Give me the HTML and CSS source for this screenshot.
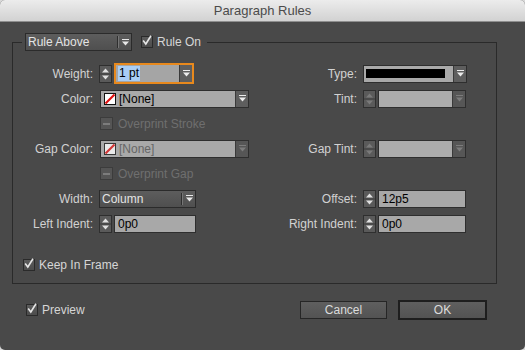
FILE: index.html
```html
<!DOCTYPE html>
<html>
<head>
<meta charset="utf-8">
<link rel="stylesheet" href="styles.css">
</head>
<body>
<div class="window">
  <div class="titlebar">Paragraph Rules</div>
  <div class="content">
    <fieldset class="group">
      <legend class="legend">
        <div class="dd dd-rule">
          <span class="dd-text">Rule Above</span>
          <span class="dd-sep"></span>
          <span class="dd-btn"><svg width="7" height="7" viewBox="0 0 7 7"><rect x="0" y="0" width="7" height="1" fill="#e8e8e8"/><path d="M0 2.5h7L3.5 6.5z" fill="#e8e8e8"/></svg></span>
        </div>
        <label class="check"><span class="box"><svg width="12" height="12" viewBox="0 0 12 12"><path d="M2.2 5.6 L4.8 9 L10 0.8" fill="none" stroke="#e6e6e6" stroke-width="1.6"/></svg></span><span>Rule On</span></label>
      </legend>

      <div class="grid">
        <!-- row 1 -->
        <div class="lbl">Weight:</div>
        <div class="ctrl">
          <span class="spin"><svg width="11" height="16" viewBox="0 0 11 16"><path d="M2 6.5L5.5 2.5L9 6.5z" fill="#e0e0e0"/><rect x="0" y="7.5" width="11" height="1" fill="#3a3a3a"/><path d="M2 9.5h7L5.5 13.5z" fill="#e0e0e0"/></svg></span>
          <span class="combo combo-focus">
            <span class="combo-text"><span class="sel">1 pt</span></span>
            <span class="combo-btn"><svg width="7" height="7" viewBox="0 0 7 7"><rect x="0" y="0" width="7" height="1" fill="#ececec"/><path d="M0 2.5h7L3.5 6.5z" fill="#ececec"/></svg></span>
          </span>
        </div>
        <div class="lbl">Type:</div>
        <div class="ctrl">
          <span class="combo combo-type">
            <span class="combo-text"><span class="line-sample"></span></span>
            <span class="combo-btn"><svg width="7" height="7" viewBox="0 0 7 7"><rect x="0" y="0" width="7" height="1" fill="#ececec"/><path d="M0 2.5h7L3.5 6.5z" fill="#ececec"/></svg></span>
          </span>
        </div>

        <!-- row 2 -->
        <div class="lbl">Color:</div>
        <div class="ctrl">
          <span class="combo combo-color">
            <span class="swatch"><svg width="12" height="12" viewBox="0 0 12 12"><rect x="0.5" y="0.5" width="11" height="11" fill="#fff" stroke="#111"/><path d="M1.5 10.5L10.5 1.5" stroke="#e01010" stroke-width="2.2"/></svg></span>
            <span class="combo-text">[None]</span>
            <span class="combo-btn"><svg width="7" height="7" viewBox="0 0 7 7"><rect x="0" y="0" width="7" height="1" fill="#ececec"/><path d="M0 2.5h7L3.5 6.5z" fill="#ececec"/></svg></span>
          </span>
        </div>
        <div class="lbl">Tint:</div>
        <div class="ctrl">
          <span class="spin spin-off"><svg width="11" height="16" viewBox="0 0 11 16"><path d="M2 6.5L5.5 2.5L9 6.5z" fill="#7a7a7a"/><rect x="0" y="7.5" width="11" height="1" fill="#3a3a3a"/><path d="M2 9.5h7L5.5 13.5z" fill="#7a7a7a"/></svg></span>
          <span class="combo combo-tint combo-off">
            <span class="combo-text"></span>
            <span class="combo-btn"><svg width="7" height="7" viewBox="0 0 7 7"><rect x="0" y="0" width="7" height="1" fill="#7c7c7c"/><path d="M0 2.5h7L3.5 6.5z" fill="#7c7c7c"/></svg></span>
          </span>
        </div>

        <!-- row 3 -->
        <div class="lbl"></div>
        <div class="ctrl opt">
          <label class="check check-off"><span class="box box-mixed"><span class="dash"></span></span><span>Overprint Stroke</span></label>
        </div>

        <!-- row 4 -->
        <div class="lbl">Gap Color:</div>
        <div class="ctrl">
          <span class="combo combo-color combo-off">
            <span class="swatch swatch-off"><svg width="12" height="12" viewBox="0 0 12 12"><rect x="0.5" y="0.5" width="11" height="11" fill="#fff" stroke="#111"/><path d="M1.5 10.5L10.5 1.5" stroke="#e01010" stroke-width="2.2"/></svg></span>
            <span class="combo-text">[None]</span>
            <span class="combo-btn"><svg width="7" height="7" viewBox="0 0 7 7"><rect x="0" y="0" width="7" height="1" fill="#7c7c7c"/><path d="M0 2.5h7L3.5 6.5z" fill="#7c7c7c"/></svg></span>
          </span>
        </div>
        <div class="lbl">Gap Tint:</div>
        <div class="ctrl">
          <span class="spin spin-off"><svg width="11" height="16" viewBox="0 0 11 16"><path d="M2 6.5L5.5 2.5L9 6.5z" fill="#7a7a7a"/><rect x="0" y="7.5" width="11" height="1" fill="#3a3a3a"/><path d="M2 9.5h7L5.5 13.5z" fill="#7a7a7a"/></svg></span>
          <span class="combo combo-tint combo-off">
            <span class="combo-text"></span>
            <span class="combo-btn"><svg width="7" height="7" viewBox="0 0 7 7"><rect x="0" y="0" width="7" height="1" fill="#7c7c7c"/><path d="M0 2.5h7L3.5 6.5z" fill="#7c7c7c"/></svg></span>
          </span>
        </div>

        <!-- row 5 -->
        <div class="lbl"></div>
        <div class="ctrl opt">
          <label class="check check-off"><span class="box box-mixed"><span class="dash"></span></span><span>Overprint Gap</span></label>
        </div>

        <!-- row 6 -->
        <div class="lbl">Width:</div>
        <div class="ctrl">
          <div class="dd dd-width">
            <span class="dd-text">Column</span>
            <span class="dd-sep"></span>
            <span class="dd-btn"><svg width="7" height="7" viewBox="0 0 7 7"><rect x="0" y="0" width="7" height="1" fill="#e8e8e8"/><path d="M0 2.5h7L3.5 6.5z" fill="#e8e8e8"/></svg></span>
          </div>
        </div>
        <div class="lbl">Offset:</div>
        <div class="ctrl">
          <span class="spin"><svg width="11" height="16" viewBox="0 0 11 16"><path d="M2 6.5L5.5 2.5L9 6.5z" fill="#e0e0e0"/><rect x="0" y="7.5" width="11" height="1" fill="#3a3a3a"/><path d="M2 9.5h7L5.5 13.5z" fill="#e0e0e0"/></svg></span>
          <span class="field field-right">12p5</span>
        </div>

        <!-- row 7 -->
        <div class="lbl">Left Indent:</div>
        <div class="ctrl">
          <span class="spin"><svg width="11" height="16" viewBox="0 0 11 16"><path d="M2 6.5L5.5 2.5L9 6.5z" fill="#e0e0e0"/><rect x="0" y="7.5" width="11" height="1" fill="#3a3a3a"/><path d="M2 9.5h7L5.5 13.5z" fill="#e0e0e0"/></svg></span>
          <span class="field field-left">0p0</span>
        </div>
        <div class="lbl">Right Indent:</div>
        <div class="ctrl">
          <span class="spin"><svg width="11" height="16" viewBox="0 0 11 16"><path d="M2 6.5L5.5 2.5L9 6.5z" fill="#e0e0e0"/><rect x="0" y="7.5" width="11" height="1" fill="#3a3a3a"/><path d="M2 9.5h7L5.5 13.5z" fill="#e0e0e0"/></svg></span>
          <span class="field field-right">0p0</span>
        </div>
      </div>

      <div class="keep">
        <label class="check"><span class="box"><svg width="12" height="12" viewBox="0 0 12 12"><path d="M2.2 5.6 L4.8 9 L10 0.8" fill="none" stroke="#e6e6e6" stroke-width="1.6"/></svg></span><span>Keep In Frame</span></label>
      </div>
    </fieldset>

    <div class="footer">
      <label class="check check-preview"><span class="box"><svg width="12" height="12" viewBox="0 0 12 12"><path d="M2.2 5.6 L4.8 9 L10 0.8" fill="none" stroke="#e6e6e6" stroke-width="1.6"/></svg></span><span>Preview</span></label>
      <div class="buttons">
        <button class="btn">Cancel</button>
        <button class="btn btn-default">OK</button>
      </div>
    </div>
  </div>
</div>
</body>
</html>
```

FILE: styles.css
```css
* { box-sizing: border-box; }
html, body { margin: 0; padding: 0; }
body {
  background: #d8d8d8;
  font-family: "Liberation Sans", Arial, sans-serif;
  font-size: 12px;
  color: #d2d2d2;
}
.window {
  width: 525px;
  height: 350px;
  background: #494949;
  border-radius: 5px;
  overflow: hidden;
  display: flex;
  flex-direction: column;
}
.titlebar {
  flex: none;
  height: 22px;
  background: linear-gradient(#ececec, #d2d2d2);
  border-bottom: 1px solid #8e8e8e;
  color: #4b4b4b;
  font-size: 13px;
  line-height: 21px;
  text-align: center;
}
.content {
  padding: 11px 28px 0 12px;
}
.group {
  margin: 0;
  padding: 10px 0 6px 0;
  border: 1px solid #2a2a2a;
  min-inline-size: 0;
}
.legend {
  margin-left: 9px;
  padding: 0 6px 0 3px;
  display: flex;
  align-items: center;
  gap: 9px;
  height: 18px;
}

/* dark dropdown */
.dd {
  height: 18px;
  display: flex;
  align-items: stretch;
  border: 1px solid #2b2b2b;
  background: linear-gradient(#5d5d5d, #4f4f4f);
  color: #e4e4e4;
}
.dd-rule { width: 107px; }
.dd-width { width: 97px; }
.dd-text {
  flex: 1;
  padding-left: 2px;
  line-height: 16px;
  white-space: nowrap;
}
.dd-sep {
  width: 2px;
  margin: 2px 0;
  border-left: 1px solid #2e2e2e;
  border-right: 1px solid #767676;
}
.dd-btn {
  width: 12px;
  display: flex;
  align-items: center;
  justify-content: center;
}
.dd-btn svg { display: block; }

/* checkboxes */
.check {
  display: flex;
  align-items: center;
  gap: 4px;
  color: #d6d6d6;
  white-space: nowrap;
}
.box {
  width: 12px;
  height: 12px;
  border: 1px solid #2a2a2a;
  background: linear-gradient(#5c5c5c, #4c4c4c);
  position: relative;
  flex: none;
}
.box svg {
  position: absolute;
  left: -1px;
  top: -2px;
}
.check-off { color: #6f6f6f; gap: 5px; }
.box-mixed {
  width: 13px;
  height: 13px;
  border-color: #3c3c3c;
  background: #555;
  display: flex;
  align-items: center;
  justify-content: center;
}
.dash {
  width: 7px;
  height: 2px;
  background: #7c7c7c;
}

/* grid */
.grid {
  display: grid;
  grid-template-columns: 80px 150px 102px 104px;
  column-gap: 6px;
  grid-auto-rows: 25px;
  align-items: center;
}
.lbl {
  text-align: right;
  color: #d2d2d2;
  white-space: nowrap;
}
.ctrl {
  display: flex;
  align-items: center;
}
.opt { grid-column: 2 / -1; padding-left: 1px; }

/* spinner */
.spin {
  flex: none;
  width: 13px;
  height: 18px;
  border: 1px solid #2f2f2f;
  background: #5a5a5a;
  margin-right: 2px;
}
.spin svg { display: block; }

/* combo / field */
.combo {
  height: 18px;
  display: flex;
  align-items: stretch;
  border: 1px solid #2e2e2e;
  background: #a9a9a9;
  color: #000;
}
.combo-text {
  flex: 1;
  line-height: 16px;
  padding-left: 2px;
  white-space: nowrap;
  display: flex;
  align-items: center;
}
.combo-btn {
  width: 13px;
  flex: none;
  border-left: 1px solid #3a3a3a;
  background: #5e5e5e;
  display: flex;
  align-items: center;
  justify-content: center;
}
.combo-btn svg { display: block; }
.combo-focus {
  width: 80px;
  height: 21px;
  border: 2px solid #e8891d;
  background: #a5a5a5;
}
.combo-focus .combo-btn { border-left-color: #3a3a3a; }
.sel {
  background: #a9cdf5;
  color: #000;
  padding: 0 1px;
  line-height: 15px;
}
.combo-type {
  width: 105px;
  margin-left: 0;
}
.combo-type .combo-text { padding-left: 2px; }
.line-sample {
  display: block;
  width: 79px;
  height: 9px;
  background: #000;
}
.combo-color {
  width: 149px;
  margin-left: 1px;
}
.swatch {
  flex: none;
  display: flex;
  align-items: center;
  padding-left: 3px;
}
.swatch svg { display: block; }
.combo-color .combo-text { padding-left: 3px; }
.combo-tint { width: 88px; background: #acacac; }
.combo-off { color: #666; }
.combo-off .combo-btn { background: #565656; }
.swatch-off svg { opacity: 0.75; }

.field {
  height: 18px;
  border: 1px solid #2e2e2e;
  background: #a8a8a8;
  color: #000;
  line-height: 16px;
  padding-left: 3px;
}
.field-left { width: 82px; margin-left: 0; }
.field-right { width: 88px; }

.keep {
  margin-top: 16px;
  height: 25px;
  display: flex;
  align-items: center;
  padding-left: 10px;
}

/* footer */
.footer {
  margin-top: 16px;
  height: 20px;
  display: flex;
  align-items: center;
  padding-right: 10px;
}
.check-preview { margin-left: 14px; }
.buttons {
  margin-left: auto;
  display: flex;
  align-items: center;
  gap: 11px;
}
.btn {
  width: 87px;
  height: 18px;
  padding: 0;
  border: 1px solid #262626;
  background: linear-gradient(#5f5f5f, #535353);
  color: #dcdcdc;
  font-family: "Liberation Sans", Arial, sans-serif;
  font-size: 12px;
  line-height: 16px;
}
.btn-default {
  width: 89px;
  height: 20px;
  border: 2px solid #1e1e1e;
}
```
